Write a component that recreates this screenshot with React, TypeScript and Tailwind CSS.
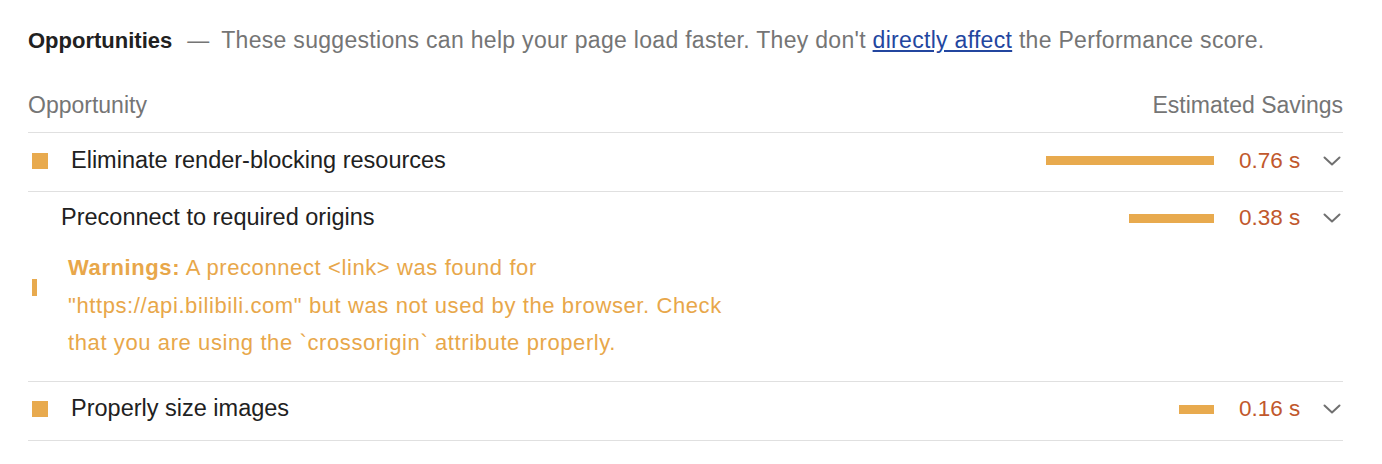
const font = { fontFamily: '"Liberation Sans", Arial, sans-serif' }

function Chevron() {
  return (
    <svg width="18" height="10" viewBox="0 0 18 10" fill="none" className="shrink-0">
      <path d="M1.5 1.5 L9 8.5 L16.5 1.5" stroke="#707070" strokeWidth="2" strokeLinecap="round" strokeLinejoin="round" />
    </svg>
  )
}

function Savings({ bar, value }: { bar: number; value: string }) {
  return (
    <div className="flex items-center">
      <div className="h-[9px] bg-[#e8aa4e]" style={{ width: bar }} />
      <span className="ml-[25px] w-[62px] text-[22.5px] text-[#c1582c]">{value}</span>
      <div className="ml-[22px] mr-[2px]">
        <Chevron />
      </div>
    </div>
  )
}

export default function App() {
  return (
    <div className="min-h-screen bg-white pl-[28px] pr-[39px] pt-[27px]" style={font}>
      <p className="flex h-[26px] items-baseline whitespace-nowrap leading-[26px] text-[#757575]">
        <span className="text-[22px] font-bold text-[#212121]">Opportunities</span>
        <span className="ml-[15px] mr-[12px] text-[22px]">—</span>
        <span className="text-[23px] tracking-[0.3px]">
          These suggestions can help your page load faster. They don't{' '}
          <a className="text-[#23469f] underline">directly affect</a> the Performance score.
        </span>
      </p>

      <div className="mt-[39px] flex justify-between border-b border-[#e0e0e0] pb-[14px] leading-[26px] text-[23px] text-[#757575]">
        <span>Opportunity</span>
        <span>Estimated Savings</span>
      </div>

      <div className="flex h-[59px] items-center justify-between border-b border-[#e0e0e0] pb-[3px]">
        <div className="flex items-center">
          <div className="ml-[4px] h-[16px] w-[16px] bg-[#e8aa4e]" />
          <span className="ml-[23px] text-[23.5px] text-[#212121]">Eliminate render-blocking resources</span>
        </div>
        <Savings bar={168} value="0.76 s" />
      </div>

      <div className="border-b border-[#e0e0e0] pb-[19px]">
        <div className="flex h-[52px] items-center justify-between">
          <span className="ml-[33px] text-[23.5px] text-[#212121]">Preconnect to required origins</span>
          <Savings bar={85} value="0.38 s" />
        </div>
        <div className="mt-[5px] flex">
          <div className="ml-[4px] mt-[30px] h-[17px] w-[5px] shrink-0 bg-[#e8aa4e]" />
          <p className="ml-[31px] w-[680px] text-[22px] tracking-[0.6px] leading-[37.5px] text-[#e8a74a]">
            <span className="font-bold">Warnings:</span> A preconnect &lt;link&gt; was found for
            "https://api.bilibili.com" but was not used by the browser. Check that you are using
            the `crossorigin` attribute properly.
          </p>
        </div>
      </div>

      <div className="flex h-[59px] items-center justify-between border-b border-[#e0e0e0] pb-[3px]">
        <div className="flex items-center">
          <div className="ml-[4px] h-[16px] w-[16px] bg-[#e8aa4e]" />
          <span className="ml-[23px] text-[23.5px] text-[#212121]">Properly size images</span>
        </div>
        <Savings bar={35} value="0.16 s" />
      </div>
    </div>
  )
}
